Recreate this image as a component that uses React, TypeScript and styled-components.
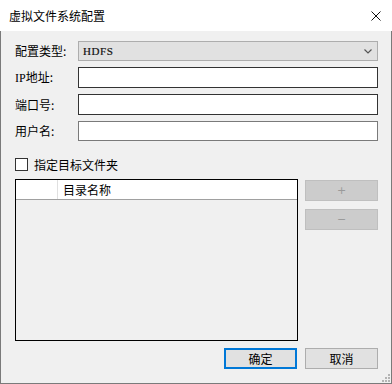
import React, {useState} from "react";
import styled, {createGlobalStyle} from "styled-components";

const GlobalStyle = createGlobalStyle`
  html, body {
    margin: 0;
    padding: 0;
    background: #ffffff;
  }
  * {
    box-sizing: border-box;
  }
`;

const CJK = `"Noto Sans CJK SC", "Noto Sans", sans-serif`;

export default function App() {
  const [checked, setChecked] = useState(false);

  return (
    <>
      <GlobalStyle/>
      <Window>
        <TitleBar>
          <Title>虚拟文件系统配置</Title>
          <CloseIcon viewBox="0 0 10 10" aria-label="关闭">
            <path d="M0.5 0.5 L9.5 9.5 M9.5 0.5 L0.5 9.5" stroke="#111" strokeWidth="1" fill="none"/>
          </CloseIcon>
        </TitleBar>
        <Body>
          <FormGrid>
            <Label>配置类型:</Label>
            <Select>
              <SelectValue>HDFS</SelectValue>
              <Chevron viewBox="0 0 8 5">
                <path d="M0.5 0.5 L4 4 L7.5 0.5" stroke="#555" strokeWidth="1.2" fill="none"/>
              </Chevron>
            </Select>
            <Label><Latin>IP</Latin>地址:</Label>
            <Input $tone="dark"/>
            <Label>端口号:</Label>
            <Input $tone="dark"/>
            <Label>用户名:</Label>
            <Input $tone="light"/>
          </FormGrid>

          <CheckRow onClick={() => setChecked(c => !c)}>
            <CheckBox>{checked ? "✓" : ""}</CheckBox>
            <span>指定目标文件夹</span>
          </CheckRow>

          <TableArea>
            <Table>
              <HeaderRow>
                <HeaderCell $w={42}/>
                <HeaderCell>目录名称</HeaderCell>
              </HeaderRow>
            </Table>
            <SideButtons>
              <SideButton disabled>+</SideButton>
              <SideButton disabled>−</SideButton>
            </SideButtons>
          </TableArea>

          <Footer>
            <DialogButton $primary>确定</DialogButton>
            <DialogButton>取消</DialogButton>
          </Footer>
          <Grip viewBox="0 0 9 9">
            {[[7, 1], [7, 4], [4, 4], [7, 7], [4, 7], [1, 7]].map(([x, y]) => (
              <rect key={`${x}-${y}`} x={x} y={y} width="2" height="2" fill="#b4b4b4"/>
            ))}
          </Grip>
        </Body>
      </Window>
    </>
  );
}

const Window = styled.div`
  width: 392px;
  height: 384px;
  display: flex;
  flex-direction: column;
  font-family: ${CJK};
  font-size: 12px;
  color: #000;
`;

const TitleBar = styled.div`
  height: 31px;
  flex: none;
  background: #ffffff;
  display: flex;
  align-items: center;
  justify-content: space-between;
  padding: 0 11px 0 9px;
`;

const Title = styled.div`
  font-size: 12px;
  color: #000;
`;

const CloseIcon = styled.svg`
  width: 10px;
  height: 10px;
`;

const Body = styled.div`
  position: relative;
  flex: 1;
  background: #f0f0f0;
  border-left: 1px solid #7a7a7a;
  border-right: 1px solid #7a7a7a;
  border-bottom: 1px solid #7a7a7a;
  padding: 10px 13px 0 14px;
  display: flex;
  flex-direction: column;
`;

const FormGrid = styled.div`
  display: grid;
  grid-template-columns: 63px 1fr;
  grid-template-rows: 20px 21px 21px 20px;
  row-gap: 6px;
  align-items: center;
`;

const Label = styled.div`
  font-size: 12px;
  line-height: 20px;
`;

const Latin = styled.span`
  font-family: "Liberation Serif", serif;
  font-size: 12px;
`;

const Select = styled.div`
  height: 20px;
  background: #e1e1e1;
  border: 1px solid #adadad;
  display: flex;
  align-items: center;
  justify-content: space-between;
  padding: 0 5px 0 4px;
`;

const SelectValue = styled.span`
  font-family: "Liberation Serif", serif;
  font-size: 11px;
  letter-spacing: 0.6px;
  color: #111;
  -webkit-text-stroke: 0.2px #111;
`;

const Chevron = styled.svg`
  width: 8px;
  height: 5px;
`;

const Input = styled.input<{ $tone: "dark" | "light" }>`
  height: ${p => p.$tone === "dark" ? 21 : 20}px;
  width: 100%;
  margin: 0;
  background: #ffffff;
  border: 1px solid ${p => p.$tone === "dark" ? "#333333" : "#7a7a7a"};
  outline: none;
  font: inherit;
  padding: 0 4px;
`;

const CheckRow = styled.label`
  display: flex;
  align-items: center;
  gap: 6px;
  margin-top: 17px;
  height: 13px;
  line-height: 13px;
  cursor: default;
`;

const CheckBox = styled.span`
  width: 13px;
  height: 13px;
  flex: none;
  background: #ffffff;
  border: 1px solid #333333;
  font-size: 10px;
  line-height: 11px;
  text-align: center;
`;

const TableArea = styled.div`
  display: flex;
  align-items: flex-start;
  gap: 7px;
  margin-top: 8px;
`;

const Table = styled.div`
  width: 284px;
  height: 162px;
  border: 1px solid #000;
  background: #f0f0f0;
`;

const HeaderRow = styled.div`
  height: 20px;
  display: flex;
  background: #ffffff;
  border-bottom: 1px solid #a0a0a0;
`;

const HeaderCell = styled.div<{ $w?: number }>`
  ${p => p.$w ? `width: ${p.$w}px; flex: none;` : "flex: 1;"}
  border-right: 1px solid #e0e0e0;
  padding-left: 5px;
  line-height: 19px;
  font-size: 12px;
  &:last-child {
    border-right: none;
  }
`;

const SideButtons = styled.div`
  display: flex;
  flex-direction: column;
  gap: 8px;
  padding-top: 1px;
`;

const SideButton = styled.button`
  width: 73px;
  height: 21px;
  margin: 0;
  padding: 0;
  background: #cccccc;
  border: 1px solid #bfbfbf;
  color: #9a9a9a;
  font-family: "DejaVu Sans", sans-serif;
  font-size: 11px;
  line-height: 18px;
`;

const Footer = styled.div`
  display: flex;
  justify-content: flex-end;
  gap: 8px;
  margin-top: 7px;
`;

const DialogButton = styled.button<{ $primary?: boolean }>`
  width: 73px;
  height: 21px;
  margin: 0;
  padding: 0;
  background: #e1e1e1;
  border: ${p => p.$primary ? "2px solid #0078d7" : "1px solid #adadad"};
  font-family: ${CJK};
  font-size: 12px;
  color: #000;
`;

const Grip = styled.svg`
  position: absolute;
  right: 1px;
  bottom: 1px;
  width: 9px;
  height: 9px;
`;
